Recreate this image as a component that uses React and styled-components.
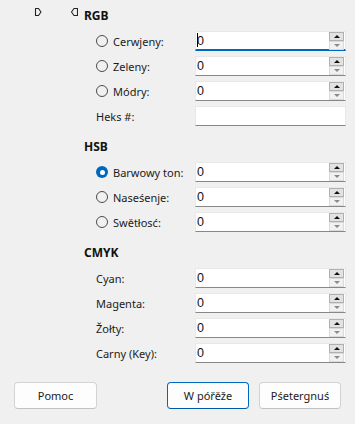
import styled, { createGlobalStyle } from "styled-components";

const GlobalStyle = createGlobalStyle`
body {
  margin: 0;
  background: #f0f0f0;
  font-family: "Noto Sans", "Open Sans", sans-serif;
  color: #1b1b1b;
}
`

const Page = styled.div`
width: 355px;
height: 424px;
display: flex;
flex-direction: column;
background: #f0f0f0;
`

const Main = styled.div`
display: flex;
`

const Markers = styled.div`
width: 84px;
box-sizing: border-box;
padding: 7px 0 0 34px;
display: flex;
align-items: flex-start;
gap: 28px;
`

const Form = styled.div`
width: 262px;
padding-top: 6px;
display: flex;
flex-direction: column;
gap: 11px;
`

const Section = styled.div`
display: flex;
flex-direction: column;
gap: 5px;
`

const SectionTitle = styled.div`
height: 20px;
line-height: 20px;
font-size: 12px;
font-weight: 700;
color: #111;
`

const Row = styled.div`
display: flex;
align-items: center;
height: 20px;
`

const Label = styled.div`
width: 111px;
box-sizing: border-box;
padding-left: 12px;
display: flex;
align-items: center;
gap: 5px;
font-size: 11px;
white-space: nowrap;
`

const Radio = styled.span`
width: 12px;
height: 12px;
box-sizing: border-box;
border-radius: 50%;
flex: none;
border: ${p => p.$checked ? "none" : "1px solid #4c4c4c"};
background: ${p => p.$checked ? "#0067c0" : "transparent"};
display: flex;
align-items: center;
justify-content: center;
&::after {
  content: "";
  display: ${p => p.$checked ? "block" : "none"};
  width: 5px;
  height: 5px;
  border-radius: 50%;
  background: #fff;
}
`

const Field = styled.div`
position: relative;
width: 151px;
height: 20px;
box-sizing: border-box;
background: #fff;
border: 1px solid #e8e8e8;
border-bottom: ${p => p.$focused ? "2px solid #0067c0" : "1px solid #878787"};
display: flex;
align-items: center;
padding: 0 0 0 1px;
font-family: "Liberation Sans", Arial, sans-serif;
font-size: 12.5px;
color: #111;
`

const Value = styled.span`
flex: 1;
`

const Caret = styled.span`
position: absolute;
left: 1px;
top: 1px;
width: 1px;
height: 14px;
background: #000;
`

const Spinner = styled.div`
align-self: flex-start;
margin: 0 1px 0 auto;
display: flex;
flex-direction: column;
`

const SpinButton = styled.div`
width: 15px;
height: 9px;
box-sizing: border-box;
border: 1px solid ${p => p.$up ? "#b0b0b0" : "#dadada"};
background: ${p => p.$up ? "#e2e2e2" : "#f1f1f1"};
display: flex;
align-items: center;
justify-content: center;
&::after {
  content: "";
  width: 0;
  height: 0;
  border-left: 3px solid transparent;
  border-right: 3px solid transparent;
  ${p => p.$up
    ? "border-bottom: 3px solid #111;"
    : "border-top: 3px solid #8a8a8a;"}
}
`

const Buttons = styled.div`
margin-top: 19px;
padding: 0 14px;
display: flex;
justify-content: space-between;
`

const RightButtons = styled.div`
display: flex;
gap: 10px;
`

const Button = styled.button`
width: ${p => p.$w || 82}px;
height: 27px;
box-sizing: border-box;
background: #fdfdfd;
border: 1px solid ${p => p.$primary ? "#0067c0" : "#d3d3d3"};
border-bottom-color: ${p => p.$primary ? "#0058a8" : "#c2c2c2"};
border-radius: 4px;
font-family: "Noto Sans", "Open Sans", sans-serif;
font-size: 11px;
color: #1b1b1b;
padding: 0;
`

const Marker = ({ flip }) => (
  <svg width="8" height="10" viewBox="0 0 8 10">
    <path
      d={flip ? "M7.5 1.5 H4 L1.5 5 L4 8.5 H7.5 Z" : "M1.5 1.5 H4.5 L7 5 L4.5 8.5 H1.5 Z"}
      fill="none" stroke="#222" strokeWidth="1.1" strokeLinejoin="round" />
  </svg>
)

const FieldRow = ({ label, radio, checked, value = "0", spin = true, focused }) => (
  <Row>
    <Label>
      {radio && <Radio $checked={checked} />}
      <span>{label}</span>
    </Label>
    <Field $focused={focused}>
      {focused && <Caret />}
      <Value>{value}</Value>
      {spin && (
        <Spinner>
          <SpinButton $up />
          <SpinButton />
        </Spinner>
      )}
    </Field>
  </Row>
)

export default function App() {
  return (
    <Page>
      <GlobalStyle />
      <Main>
        <Markers>
          <Marker />
          <Marker flip />
        </Markers>
        <Form>
          <Section>
            <SectionTitle>RGB</SectionTitle>
            <FieldRow label="Cerwjeny:" radio focused />
            <FieldRow label="Zeleny:" radio />
            <FieldRow label="Módry:" radio />
            <FieldRow label="Heks #:" value="" spin={false} />
          </Section>
          <Section>
            <SectionTitle>HSB</SectionTitle>
            <FieldRow label="Barwowy ton:" radio checked />
            <FieldRow label="Naseśenje:" radio />
            <FieldRow label="Swětłosć:" radio />
          </Section>
          <Section>
            <SectionTitle>CMYK</SectionTitle>
            <FieldRow label="Cyan:" />
            <FieldRow label="Magenta:" />
            <FieldRow label="Žołty:" />
            <FieldRow label="Carny (Key):" />
          </Section>
        </Form>
      </Main>
      <Buttons>
        <Button $w={83}>Pomoc</Button>
        <RightButtons>
          <Button $primary>W póřěže</Button>
          <Button>Pśetergnuś</Button>
        </RightButtons>
      </Buttons>
    </Page>
  )
}
